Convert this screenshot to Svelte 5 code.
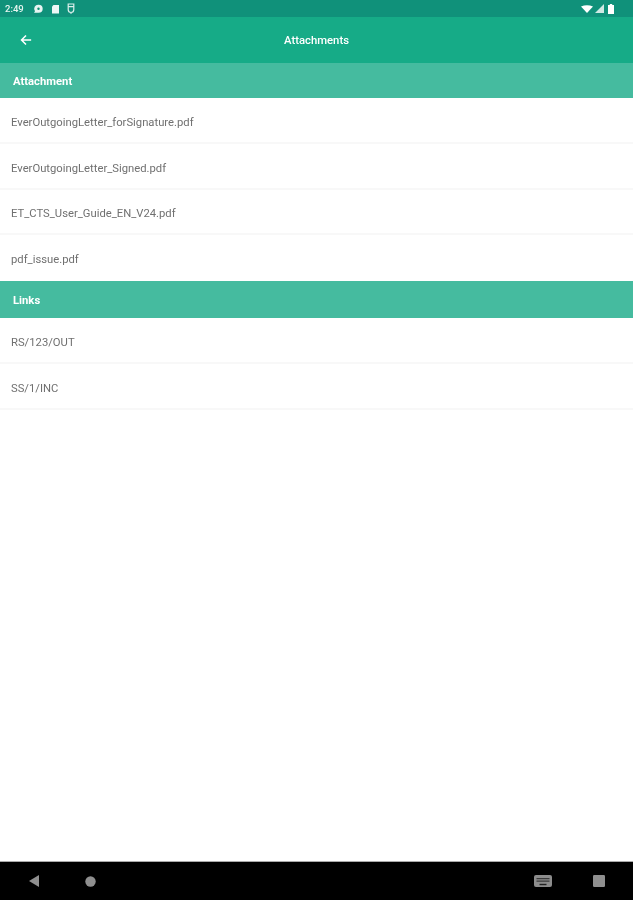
<script>
  const attachments = ['EverOutgoingLetter_forSignature.pdf', 'EverOutgoingLetter_Signed.pdf', 'ET_CTS_User_Guide_EN_V24.pdf', 'pdf_issue.pdf'];
  const links = ['RS/123/OUT', 'SS/1/INC'];
</script>

<div class="screen">
  <div class="status">
    <div class="status-left">
      <span class="time">2:49</span>
      <svg width="11" height="10" viewBox="0 0 11 10"><path d="M5.5 .8a4.2 4 0 0 1 4.2 4 4.2 4 0 0 1-4.2 4H1l1-1.6A4 4 0 0 1 5.5 .8z" fill="#fff" opacity=".9"/><circle cx="5.5" cy="4.8" r="1.2" fill="#0f8f72"/></svg>
      <svg width="9" height="10" viewBox="0 0 9 10"><path d="M2.5 1H8v8.5H1V2.5z" fill="#fff" opacity=".92"/></svg>
      <svg width="8" height="11" viewBox="0 0 8 11"><path d="M1.2 1h5.6v5.5a2.8 3 0 0 1-5.6 0zM1.2 3.6h5.6M3 9.8h2" fill="none" stroke="#fff" stroke-width="1.2" opacity=".85"/></svg>
    </div>
    <div class="status-right">
      <svg class="wifi" width="12" height="8" viewBox="0 0 12 8"><path d="M0 1.6Q6-1.2 12 1.6L6 8z" fill="#fff"/></svg>
      <svg class="signal" width="9" height="9" viewBox="0 0 9 9"><path d="M9 0v9H0z" fill="#fff" opacity=".8"/></svg>
      <svg width="6" height="10" viewBox="0 0 6 10"><path d="M1.8 0h2.4v1H6v9H0V1h1.8z" fill="#fff"/></svg>
    </div>
  </div>

  <header class="toolbar">
    <svg class="back" width="12" height="12" viewBox="0 0 14 14"><path d="M13 7H2M7 1.8 1.8 7 7 12.2" fill="none" stroke="#fff" stroke-width="1.8"/></svg>
    <h1>Attachments</h1>
  </header>

  <main class="content">
    <div class="section first">Attachment</div>
    {#each attachments as name}
      <div class="row">{name}</div>
    {/each}
    <div class="section second">Links</div>
    {#each links as name}
      <div class="row">{name}</div>
    {/each}
  </main>

  <nav class="navbar">
    <div class="nav-left">
      <svg width="12" height="14" viewBox="0 0 12 14"><path d="M11 1v12L1 7z" fill="#8f8f8f"/></svg>
      <svg width="11" height="11" viewBox="0 0 11 11"><circle cx="5.5" cy="5.5" r="5.2" fill="#8f8f8f"/></svg>
    </div>
    <div class="nav-right">
      <svg width="18" height="12" viewBox="0 0 18 12"><rect width="18" height="12" rx="2" fill="#8c8c8c"/><path d="M2.5 3h13v1.2h-13zM2.5 5.6h13v1.2h-13z" fill="#3a3a3a"/><path d="M5.5 8.8h7v1.4h-7z" fill="#222"/></svg>
      <svg width="12" height="12" viewBox="0 0 12 12"><rect width="12" height="12" rx="1.2" fill="#8f8f8f"/></svg>
    </div>
  </nav>
</div>

<style>
  :global(body) {
    margin: 0;
    background: #fff;
  }
  .screen {
    width: 633px;
    height: 900px;
    display: flex;
    flex-direction: column;
    overflow: hidden;
    font-family: Roboto, "Liberation Sans", sans-serif;
    filter: blur(0.45px);
  }
  .status {
    height: 17px;
    flex: none;
    background: #10917a;
    display: flex;
    align-items: center;
    justify-content: space-between;
    padding: 0 19px 0 5px;
    color: #e6f5f0;
  }
  .status-left, .status-right {
    display: flex;
    align-items: center;
  }
  .status-left { gap: 7px; }
  .status-right { gap: 2px; }
  .signal { margin-right: 2px; }
  .time {
    font-size: 9.5px;
    font-weight: 500;
    margin-right: 2px;
  }
  .toolbar {
    height: 46px;
    flex: none;
    background: #16ab87;
    position: relative;
    display: flex;
    align-items: center;
    justify-content: center;
  }
  .back {
    position: absolute;
    left: 20px;
    top: 17px;
  }
  h1 {
    margin: 0;
    color: #fff;
    font-size: 11.3px;
    font-weight: 500;
  }
  .content {
    flex: 1;
    background: #fff;
  }
  .section {
    display: flex;
    align-items: center;
    box-sizing: border-box;
    padding: 1px 0 0 13px;
    background: #45bb9f;
    color: #fff;
    font-size: 11.25px;
    font-weight: 700;
  }
  .first { height: 35px; }
  .second { height: 37px; }
  .row {
    height: 45.75px;
    box-sizing: border-box;
    display: flex;
    align-items: center;
    padding: 5px 0 0 11px;
    border-bottom: 2px solid #f8f8f8;
    color: #707070;
    font-size: 11.25px;
  }
  .row:nth-child(5) {
    border-bottom-color: transparent;
  }
  .navbar {
    height: 38px;
    flex: none;
    background: #000;
    border-top: 1px solid #aaa;
    display: flex;
    align-items: center;
    justify-content: space-between;
    padding: 0 28px 0 28px;
  }
  .nav-left, .nav-right {
    display: flex;
    align-items: center;
  }
  .nav-left { gap: 45px; }
  .nav-right { gap: 41px; }
</style>
